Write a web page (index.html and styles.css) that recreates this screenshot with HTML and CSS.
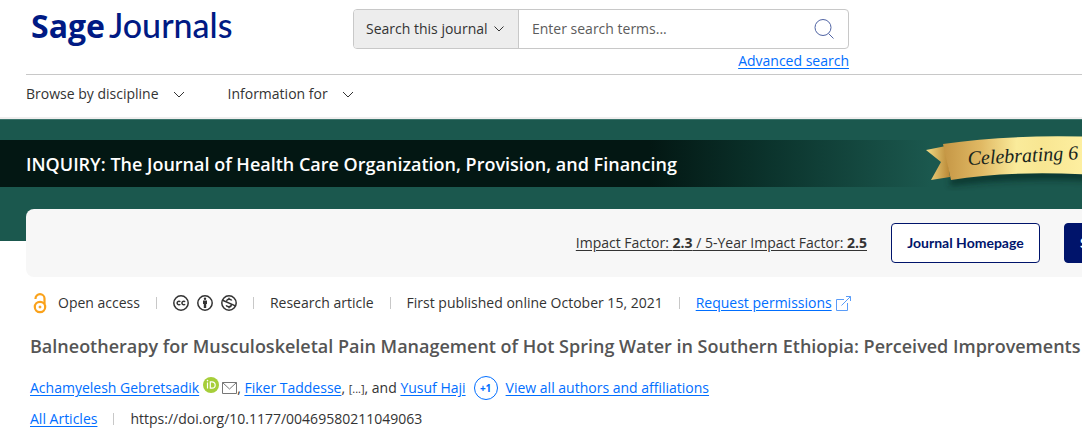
FILE: index.html
```
<!DOCTYPE html>
<html lang="en">
    <head>
        <meta charset="UTF-8">
        <title>Sage Journals</title>
        <link rel="stylesheet" href="styles.css">
    </head>
    <body>
        <header class="header">
            <div class="top">
                <a class="logo" href="#"><b>Sage</b><span>Journals</span></a>
                <form class="search">
                    <div class="search-box">
                        <div class="scope">
                            <select aria-label="Search scope">
                                <option>Search this journal</option>
                            </select>
                            <svg class="chevron" width="10" height="6" viewBox="0 0 10 6"><path d="M.5 .5L5 5L9.500 .5"/></svg>
                        </div>
                        <input type="text" aria-label="Search terms" placeholder="Enter search terms...">
                        <button type="button" aria-label="Search">
                            <svg width="22" height="22" viewBox="0 0 22 22"><circle cx="10" cy="9.500" r="8"/><path d="M15.500 15.500L20.500 20.500"/></svg>
                        </button>
                    </div>
                    <a class="link" href="#">Advanced search</a>
                </form>
            </div>
            <nav class="nav">
                <button type="button">Browse by discipline <svg class="chevron" width="12" height="7" viewBox="0 0 12 7"><path d="M1 1L6 6L11 1"/></svg></button>
                <button type="button">Information for <svg class="chevron" width="12" height="7" viewBox="0 0 12 7"><path d="M1 1L6 6L11 1"/></svg></button>
            </nav>
        </header>

        <section class="banner">
            <div class="banner-title">
                <h2>INQUIRY: The Journal of Health Care Organization, Provision, and Financing</h2>
                <svg class="ribbon" width="156" height="60" viewBox="0 0 156 60">
                    <defs>
                        <linearGradient id="gold">
                            <stop offset="0" stop-color="#c59645"/>
                            <stop offset=".25" stop-color="#e0b964"/>
                            <stop offset=".48" stop-color="#faeb9b"/>
                            <stop offset=".65" stop-color="#f8e692"/>
                            <stop offset="1" stop-color="#fff2a5"/>
                        </linearGradient>
                        <linearGradient id="tail">
                            <stop offset="0" stop-color="#f3dc86"/>
                            <stop offset="1" stop-color="#b88634"/>
                        </linearGradient>
                        <filter id="shade" x="-10%" y="-10%" width="120%" height="140%"><feGaussianBlur stdDeviation="3"/></filter>
                    </defs>
                    <path d="M24 44Q90 34 170 37V47Q90 43 24 52Z" fill="#02211b" opacity=".6" filter="url(#shade)"/>
                    <path d="M0 16L20 12L24 43L5 46L15 28Z" fill="url(#tail)"/>
                    <path d="M17 10Q85 0 170 3V41Q85 36 25 46Z" fill="url(#gold)"/>
                    <text x="42" y="31" transform="rotate(-3 42 31)">Celebrating 6</text>
                </svg>
            </div>
        </section>

        <section class="metrics">
            <a class="impact" href="#">Impact Factor: <b>2.3</b> / 5-Year Impact Factor: <b>2.5</b></a>
            <button type="button" class="btn">Journal Homepage</button>
            <button type="button" class="btn dark">Submit paper</button>
        </section>

        <main class="article">
            <ul class="info">
                <li class="access">
                    <svg width="14" height="21" viewBox="0 0 14 21" fill="none" stroke="#faa21b" stroke-width="2.200"><circle cx="7" cy="14" r="5.200"/><circle cx="7" cy="14" r="1" fill="#faa21b" stroke-width="1"/><path d="M2.500 6V5.500A4.500 4.300 0 0 1 11.500 5.500V11"/></svg>
                    Open access
                </li>
                <li class="licence">
                    <svg width="16" height="16" viewBox="0 0 16 16"><circle cx="8" cy="8" r="7.200"/><path d="M7.300 6.800A1.800 1.800 0 1 0 7.300 9.200M12.100 6.800A1.800 1.800 0 1 0 12.100 9.200"/></svg>
                    <svg width="16" height="16" viewBox="0 0 16 16"><circle cx="8" cy="8" r="7.200"/><circle class="solid" cx="8" cy="3.700" r="1.200"/><path class="solid" d="M6 5.400H10V9H9.200V13H6.800V9H6Z"/></svg>
                    <svg width="16" height="16" viewBox="0 0 16 16"><circle cx="8" cy="8" r="7.200"/><path d="M1.600 5.200L14.400 10.900M8 2.800V4.200M8 11.800V13.300M10.700 5.500C9.800 3.500 5.500 3.700 5.800 6.200M10.300 9.900C10.200 12.400 6 12.300 5.200 10.200"/></svg>
                </li>
                <li>Research article</li>
                <li>First published online October 15, 2021</li>
                <li>
                    <a class="link" href="#">Request permissions</a>
                    <svg class="external" width="15" height="15" viewBox="0 0 15 15"><path d="M8 3.500H.5V14.500H11.500V7M5.500 9.500L14.500 .5M10 .5H14.500V5"/></svg>
                </li>
            </ul>
            <h1>Balneotherapy for Musculoskeletal Pain Management of Hot Spring Water in Southern Ethiopia: Perceived Improvements</h1>
            <div class="authors">
                <a class="link" href="#">Achamyelesh Gebretsadik</a>
                <svg class="orcid" width="16" height="16" viewBox="0 0 16 16"><circle cx="8" cy="8" r="8" fill="#a6ce39"/><path d="M4.500 5.500V11.500M7.300 4.800V11.200H9A3.200 3.200 0 0 0 9 4.800Z" fill="none" stroke="#fff" stroke-width="1.200"/><circle cx="4.500" cy="3.600" r=".8" fill="#fff"/></svg>
                <svg class="mail" width="15" height="12" viewBox="0 0 15 12"><path d="M.5 .5H14.500V11.500H.5ZM.5 .5L7.500 7L14.500 .5"/></svg><span>,&nbsp;</span>
                <a class="link" href="#">Fiker Taddesse</a><span>, <small>[...]</small>, and&nbsp;</span>
                <a class="link" href="#">Yusuf Haji</a>
                <button type="button" class="more">+1</button>
                <a class="link" href="#">View all authors and affiliations</a>
            </div>
            <ul class="info doi">
                <li><a class="link" href="#">All Articles</a></li>
                <li>https://doi.org/10.1177/00469580211049063</li>
            </ul>
        </main>
    </body>
</html>
```
FILE: styles.css
```
*{ margin:0; padding:0; box-sizing:border-box; }
body{
    font: 14px/20px "Open Sans", sans-serif;
    color: #333;
    background: #fff;
    overflow-x: hidden;
}
ul{ list-style: none; }
svg{ flex: none; }
button, input, select{
    font: inherit;
    color: inherit;
    border: 0;
    background: none;
}
button{ cursor: pointer; }
.link{
    color: #006eff;
    text-decoration: underline;
    text-underline-offset: 2px;
}
.chevron{
    fill: none;
    stroke: #333;
}

/* header */
.header{
    padding-left: 26px;
    border-bottom: 2px solid #f0eeee;
}
.top{
    display: flex;
    gap: 120px;
    padding-top: 9px;
    height: 75px;
    border-bottom: 1px solid #c8c8c8;
}
.logo{
    display: flex;
    gap: 4px;
    align-items: baseline;
    width: 207px;
    padding-left: 5px;
    color: #001a84;
    font-size: 32px;
    line-height: 32px;
    text-decoration: none;
}
.logo span{
    font-family: Lato, sans-serif;
    font-size: 34px;
    font-weight: 500;
}
.search{
    display: flex;
    flex-direction: column;
    align-items: flex-end;
    width: 496px;
    gap: 2px;
}
.search-box{
    display: flex;
    width: 100%;
    height: 40px;
    border: 1px solid #c8c8c8;
    border-radius: 4px;
    overflow: hidden;
}
.scope{
    display: flex;
    align-items: center;
    background: #ededed;
    border-right: 1px solid #c8c8c8;
    padding: 0 14px 0 12px;
    gap: 6px;
}
.scope select{ appearance: none; }
.search-box input{
    flex: 1;
    min-width: 0;
    padding-left: 13px;
}
.search-box input::placeholder{ color: #5c5c5c; }
.search-box button{
    width: 48px;
    display: flex;
    align-items: center;
    justify-content: center;
}
.search-box button svg{
    fill: none;
    stroke: #5064a4;
}
.nav{
    display: flex;
    gap: 43px;
    padding: 9px 0 13px;
}
.nav button{
    display: flex;
    align-items: center;
    gap: 14px;
}

/* journal banner */
.banner{
    height: 122px;
    padding-top: 20px;
    background: #1b584e;
    border-top: 1px solid #3b756c;
}
.banner-title{
    display: flex;
    align-items: center;
    justify-content: space-between;
    height: 47px;
    padding-left: 26px;
    background: linear-gradient(90deg, #031713 60%, #0b332c 71%, #1b584e 86%);
}
.banner-title h2{
    font: 600 18px/24px "Open Sans", sans-serif;
    color: #fff;
    white-space: nowrap;
}
.ribbon text{
    font: italic 20px "Liberation Serif", serif;
    fill: #18251c;
}
.metrics{
    display: flex;
    align-items: center;
    justify-content: flex-end;
    gap: 24px;
    height: 68px;
    margin: -32px 0 0 26px;
    border-radius: 8px 0 0 8px;
    background: #f7f7f7;
    overflow: hidden;
}
.impact{
    color: #333;
    text-underline-offset: 2px;
}
.btn{
    height: 40px;
    width: 149px;
    border: 1px solid #00146b;
    border-radius: 4px;
    background: #fff;
    color: #00146b;
    font: 700 14px/20px Lato, sans-serif;
}
.btn.dark{
    margin-right: -131px;
    padding-left: 15px;
    background: #00146b;
    color: #fff;
    text-align: left;
}

/* article */
.article{
    padding: 14px 0 0 30px;
    white-space: nowrap;
}
.info{
    display: flex;
    align-items: center;
    height: 24px;
}
.info li{
    display: flex;
    align-items: center;
    gap: 4px;
}
.info li + li:before{
    content: "";
    width: 1px;
    height: 12px;
    margin: 0 12px 0 16px;
    background: #c8c8c8;
}
.info .access{
    gap: 11px;
    padding-left: 3px;
}
.info .licence{ gap: 8px; }
.info li.licence:before{ margin-right: 8px; }
.licence svg{
    fill: none;
    stroke: #333;
    stroke-width: 1.5;
}
.licence .solid{
    fill: #333;
    stroke: none;
}
.external{
    fill: none;
    stroke: #5a9cf8;
}
.article h1{
    margin-top: 19px;
    font: 600 18px/24px "Open Sans", sans-serif;
    color: #555;
}
.authors{
    display: flex;
    align-items: center;
    height: 24px;
    margin-top: 18px;
}
.authors small{ font-size: 11px; }
.orcid{ margin: 0 3px 6px 4px; }
.mail{
    fill: none;
    stroke: #777;
}
.more{
    width: 24px;
    height: 24px;
    margin: 0 8px;
    border: 1px solid #006eff;
    border-radius: 50%;
    color: #006eff;
    font-size: 10px;
    font-weight: 700;
}
.doi{ margin-top: 7px; }
```
